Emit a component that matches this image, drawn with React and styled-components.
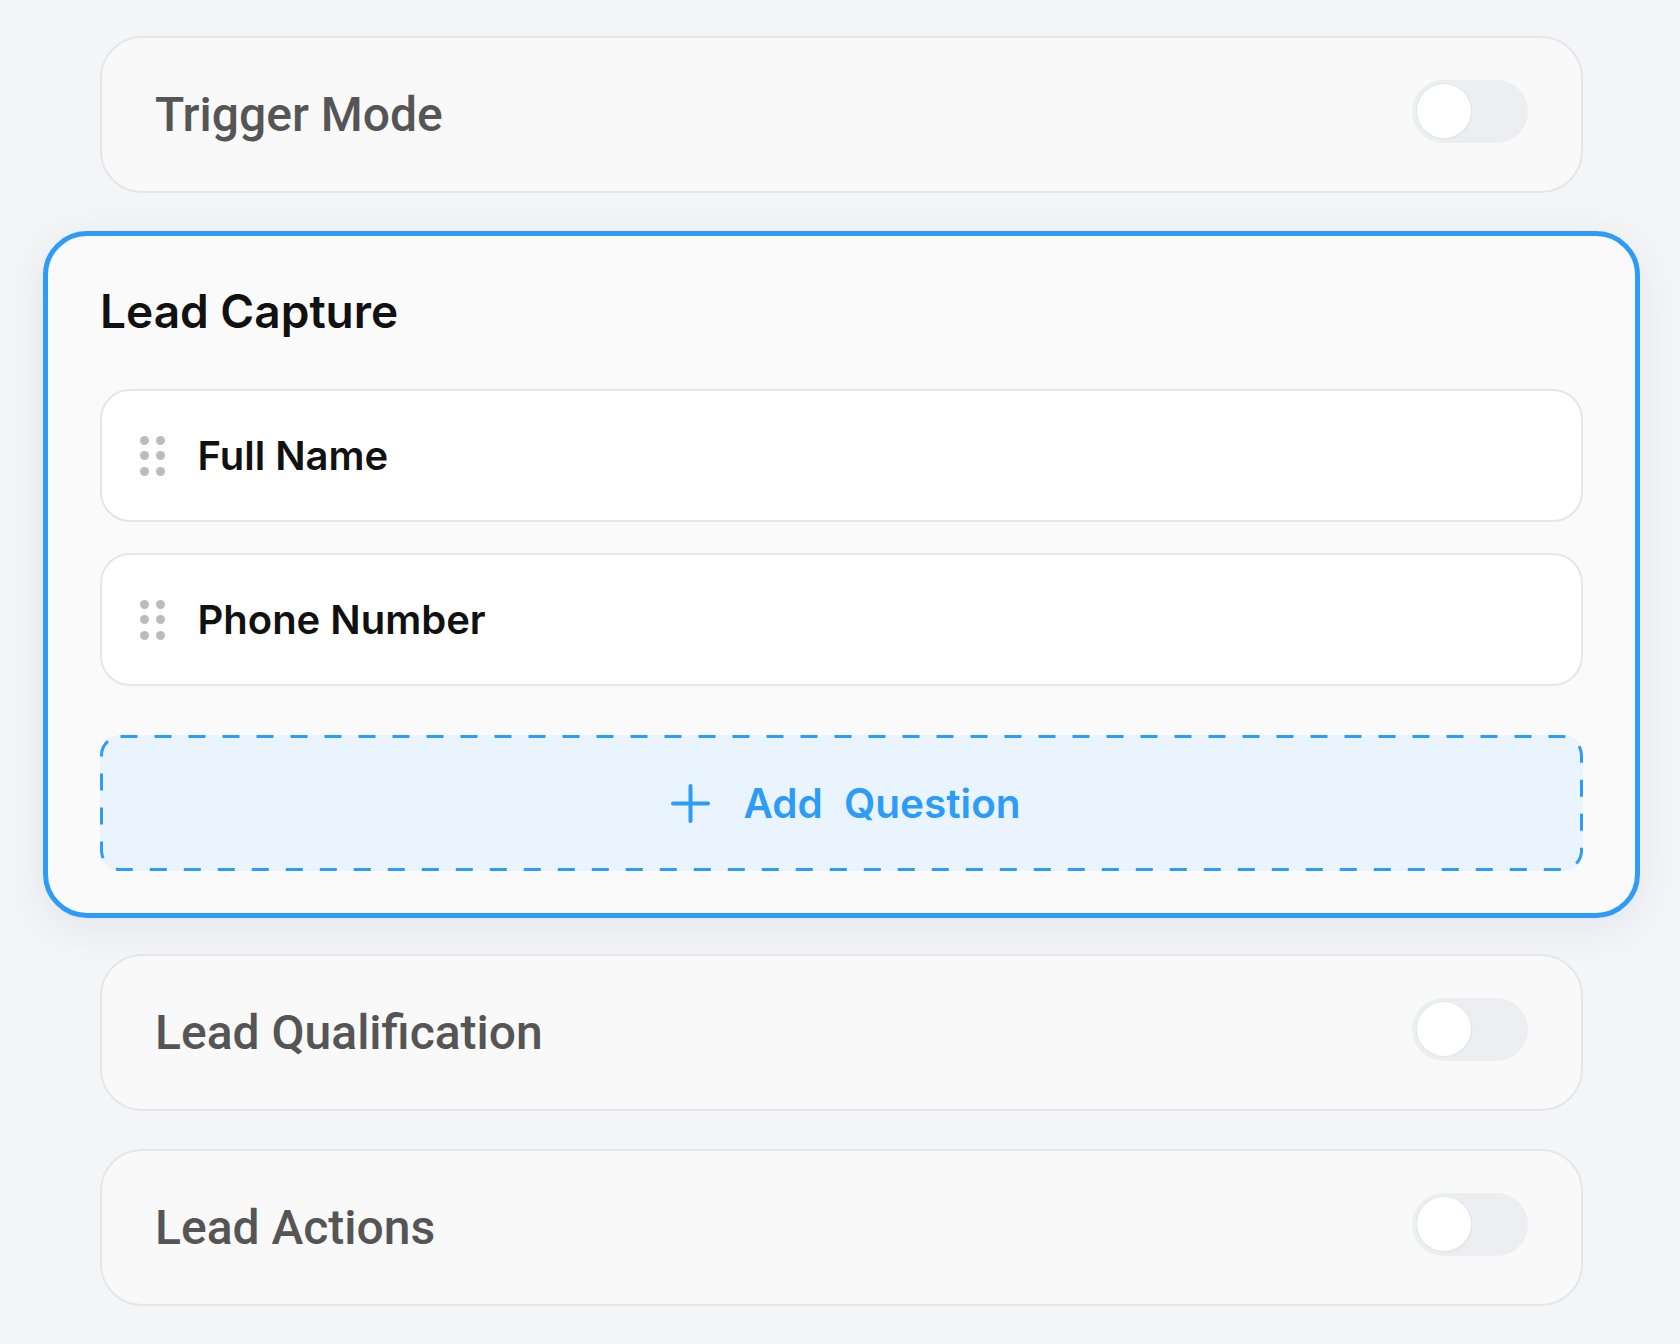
import React from "react";
import styled, { createGlobalStyle } from "styled-components";

const Global = createGlobalStyle`
  html, body { margin: 0; padding: 0; }
  body {
    background: #f4f5f7;
    font-family: "Inter", "Roboto", sans-serif;
    -webkit-font-smoothing: antialiased;
  }
`;

const Page = styled.div`
  width: 1680px;
  min-height: 1344px;
  box-sizing: border-box;
  padding: 36px 97px 0 100px;
  display: flex;
  flex-direction: column;
  gap: 38px;
  background: #f4f5f7;
`;

const Card = styled.div`
  height: 157px;
  box-sizing: border-box;
  border: 2px solid #e4e6e9;
  border-radius: 42px;
  background: #f9f9fa;
  display: flex;
  align-items: center;
  justify-content: space-between;
  padding: 0 53px 0 53px;
`;

const CardLabel = styled.span`
  font-family: "Roboto", sans-serif;
  font-weight: 500;
  font-size: 48px;
  color: #555555;
`;

const Track = styled.div`
  width: 116px;
  height: 63px;
  margin-bottom: 7px;
  box-sizing: border-box;
  border-radius: 32px;
  background: #eceef2;
  padding: 4.5px;
  display: flex;
  align-items: center;
`;

const Thumb = styled.div`
  width: 54px;
  height: 54px;
  border-radius: 50%;
  background: #ffffff;
  box-shadow: 0 0 0 1px #e4e6ea, 1px 1px 2px rgba(0, 0, 0, 0.06);
`;

const ActiveCard = styled.div`
  margin: 0 -57px -2px;
  box-sizing: border-box;
  border: 5px solid #2d9bf8;
  border-radius: 44px;
  background: #fafafa;
  padding: 47px 52px 42px;
  box-shadow: 0 10px 44px rgba(20, 30, 50, 0.07);
  display: flex;
  flex-direction: column;
`;

const Title = styled.h2`
  margin: 0;
  font-family: "Inter", sans-serif;
  font-weight: 600;
  font-size: 46px;
  line-height: 57px;
  color: #111111;
`;

const List = styled.div`
  margin-top: 49px;
  display: flex;
  flex-direction: column;
  gap: 31px;
`;

const Item = styled.div`
  height: 133px;
  box-sizing: border-box;
  border: 2px solid #e4e6e9;
  border-radius: 30px;
  background: #ffffff;
  display: flex;
  align-items: center;
  padding-left: 38px;
  gap: 33px;
`;

const Grip = styled.div`
  display: grid;
  grid-template-columns: repeat(2, 9px);
  grid-auto-rows: 9px;
  column-gap: 6.5px;
  row-gap: 6.5px;
  span {
    display: block;
    width: 9px;
    height: 9px;
    border-radius: 50%;
    background: #bcbcbc;
  }
`;

const ItemLabel = styled.span`
  font-family: "Inter", sans-serif;
  font-weight: 600;
  font-size: 40px;
  color: #111111;
`;

const AddButton = styled.button`
  position: relative;
  margin-top: 49px;
  height: 136px;
  width: 100%;
  border: none;
  border-radius: 20px;
  background: #eaf4fe;
  display: flex;
  align-items: center;
  justify-content: center;
  gap: 33px;
  cursor: pointer;
  padding: 0 0 0 9px;
  svg.dash {
    position: absolute;
    inset: 0;
    width: 100%;
    height: 100%;
    overflow: visible;
  }
`;

const AddText = styled.span`
  font-family: "Inter", sans-serif;
  font-weight: 600;
  font-size: 40.5px;
  color: #2d9bf8;
  word-spacing: 11px;
`;

const Toggle = () => (
  <Track>
    <Thumb />
  </Track>
);

const DragHandle = () => (
  <Grip>
    {Array.from({ length: 6 }).map((_, i) => (
      <span key={i} />
    ))}
  </Grip>
);

export default function App() {
  return (
    <>
      <Global />
      <Page>
        <Card>
          <CardLabel>Trigger Mode</CardLabel>
          <Toggle />
        </Card>
        <ActiveCard>
          <Title>Lead Capture</Title>
          <List>
            <Item>
              <DragHandle />
              <ItemLabel>Full Name</ItemLabel>
            </Item>
            <Item>
              <DragHandle />
              <ItemLabel>Phone Number</ItemLabel>
            </Item>
          </List>
          <AddButton>
            <svg className="dash" preserveAspectRatio="none">
              <rect
                x="1.5"
                y="1.5"
                width="calc(100% - 3px)"
                height="calc(100% - 3px)"
                rx="19"
                ry="19"
                fill="none"
                stroke="#2d9bf8"
                strokeWidth="3"
                strokeDasharray="17 17"
              />
            </svg>
            <svg width="39" height="39" viewBox="0 0 39 39">
              <path
                d="M19.5 2v35M2 19.5h35"
                stroke="#2d9bf8"
                strokeWidth="4"
                strokeLinecap="round"
              />
            </svg>
            <AddText>Add Question</AddText>
          </AddButton>
        </ActiveCard>
        <Card>
          <CardLabel>Lead Qualification</CardLabel>
          <Toggle />
        </Card>
        <Card>
          <CardLabel>Lead Actions</CardLabel>
          <Toggle />
        </Card>
      </Page>
    </>
  );
}
